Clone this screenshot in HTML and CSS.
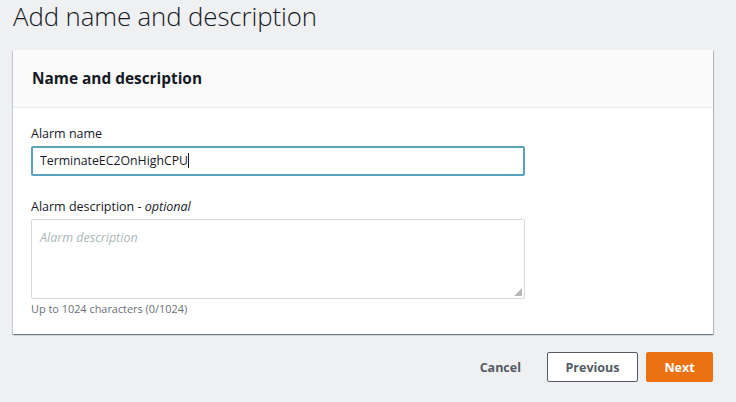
FILE: index.html
```html
<!DOCTYPE html>
<html lang="en">
<head>
<meta charset="utf-8">
<title>Add name and description</title>
<link rel="stylesheet" href="styles.css">
</head>
<body>
<div class="page">
  <h1 class="title">Add name and description</h1>
  <section class="card">
    <header class="card-header">
      <h2>Name and description</h2>
    </header>
    <div class="card-body">
      <div class="field">
        <label class="label" for="name">Alarm name</label>
        <div class="input focused">TerminateEC2OnHighCPU<span class="caret"></span></div>
      </div>
      <div class="field">
        <label class="label">Alarm description - <i>optional</i></label>
        <div class="textarea">
          <span class="placeholder">Alarm description</span>
          <svg class="grip" width="8" height="8" viewBox="0 0 8 8"><path d="M8 0 L8 8 L0 8 Z" fill="#b8b8b8"/></svg>
        </div>
        <div class="hint">Up to 1024 characters (0/1024)</div>
      </div>
    </div>
  </section>
  <div class="actions">
    <button class="btn link">Cancel</button>
    <button class="btn normal">Previous</button>
    <button class="btn primary">Next</button>
  </div>
</div>
</body>
</html>
```
FILE: styles.css
```css
* { box-sizing: border-box; }
html, body { margin: 0; padding: 0; }
body {
  background: #eff0f2;
  font-family: "Open Sans", "Liberation Sans", sans-serif;
  color: #16191f;
  width: 736px;
  height: 402px;
  overflow: hidden;
}
.page { padding: 1px 23px 0 13px; }
.title {
  margin: 0;
  font-weight: 300;
  font-size: 25.8px;
  line-height: 30px;
  color: #16191f;
  letter-spacing: -0.1px;
}
.card {
  margin-top: 19px;
  background: #fff;
  box-shadow: 0 1px 1px 0 rgba(0,28,36,.35), 1px 1px 1px 0 rgba(0,28,36,.2), -1px 1px 1px 0 rgba(0,28,36,.12);
}
.card-header {
  background: #fafafa;
  border-bottom: 1px solid #eaeded;
  height: 58px;
  display: flex;
  align-items: center;
  padding: 0 19px;
}
.card-header h2 {
  margin: 0;
  font-size: 15.4px;
  font-weight: 700;
  color: #16191f;
}
.card-body { padding: 16px 18px 17px; }
.field + .field { margin-top: 21px; }
.label {
  display: block;
  font-size: 12.5px;
  line-height: 20px;
  color: #16191f;
  margin-bottom: 2px;
}
.label i { font-style: italic; }
.input {
  width: 494px;
  height: 30px;
  border: 2px solid #5aa3bd;
  border-radius: 2px;
  font-size: 12.3px;
  line-height: 26px;
  padding: 0 7px;
  color: #16191f;
}
.caret {
  display: inline-block;
  width: 1px;
  height: 15px;
  background: #16191f;
  vertical-align: -3px;
}
.textarea {
  position: relative;
  width: 494px;
  height: 80px;
  border: 1px solid #d5dbdb;
  border-radius: 2px;
  padding: 5px 8px;
}
.placeholder {
  font-style: italic;
  font-size: 12.5px;
  color: #aab7b8;
}
.grip { position: absolute; right: 2px; bottom: 2px; }
.hint {
  margin-top: 2px;
  font-size: 10.9px;
  color: #687078;
  line-height: 16px;
}
.actions {
  display: flex;
  justify-content: flex-end;
  align-items: center;
  gap: 8px;
  margin-top: 18px;
}
.btn {
  font-family: inherit;
  font-weight: 700;
  font-size: 12.5px;
  height: 30px;
  border-radius: 2px;
  cursor: pointer;
}
.btn.link {
  background: none;
  border: none;
  color: #545b64;
  padding: 0 18px 0 24px;
}
.btn.normal {
  background: #fff;
  border: 1px solid #545b64;
  color: #545b64;
  width: 91px;
}
.btn.primary {
  background: #ec7211;
  border: 1px solid #ec7211;
  color: #fff;
  width: 67px;
}
```
